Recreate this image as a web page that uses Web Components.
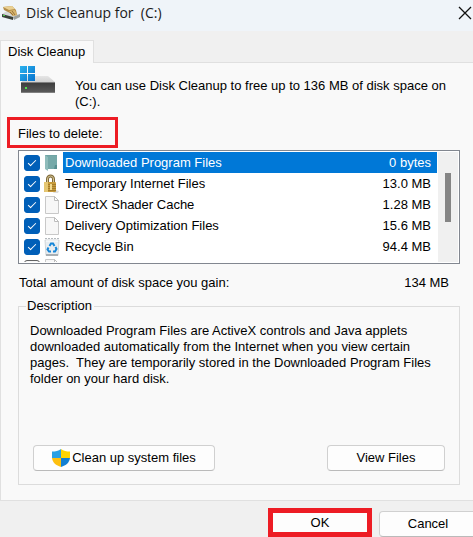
<!DOCTYPE html>
<html lang="en">
<head>
<meta charset="utf-8">
<title>Disk Cleanup</title>
<style>
html, body {
    height: 100%;
}

body {
    margin: 0;
    overflow: hidden;
    font: 13px/16px "Liberation Sans", Arial, sans-serif;
    color: #000;
    background: #f0f0f0;
}
</style>
</head>
<body>

<cleanup-dialog>
    <title-bar>Disk Cleanup for&nbsp; (C:)</title-bar>
    <tab-panel label="Disk Cleanup">
        <drive-info>You can use Disk Cleanup to free up to 136 MB of disk space on (C:).</drive-info>
        <mark-box>Files to delete:</mark-box>
        <file-list>
            <file-item name="Downloaded Program Files" size="0 bytes" icon="folder" checked selected></file-item>
            <file-item name="Temporary Internet Files" size="13.0 MB" icon="lock" checked></file-item>
            <file-item name="DirectX Shader Cache" size="1.28 MB" icon="page" checked></file-item>
            <file-item name="Delivery Optimization Files" size="15.6 MB" icon="page" checked></file-item>
            <file-item name="Recycle Bin" size="94.4 MB" icon="bin" checked></file-item>
            <file-item icon="page"></file-item>
        </file-list>
        <total-line size="134 MB">Total amount of disk space you gain:</total-line>
        <group-box label="Description">
            Downloaded Program Files are ActiveX controls and Java applets downloaded automatically from the Internet when you view certain pages.&nbsp; They are temporarily stored in the Downloaded Program Files folder on your hard disk.
            <push-button slot="actions" class="wide" shield>Clean up system files</push-button>
            <push-button slot="actions" class="medium">View Files</push-button>
        </group-box>
    </tab-panel>
    <push-button slot="footer" class="ok" marked>OK</push-button>
    <push-button slot="footer" class="cancel">Cancel</push-button>
</cleanup-dialog>

<script>
(function () {

    // Shared helper: clone a template string into an open shadow root
    function attach(host, html) {
        const template = document.createElement('template');
        template.innerHTML = html;
        const root = host.attachShadow({ mode: 'open' });
        root.appendChild(template.content.cloneNode(true));
        return root;
    }

    const icons = {
        folder: `
<svg width="16" height="18" viewBox="0 0 16 18">
    <path d="M1 1h12v14H1z" fill="#6fa3a4"/>
    <path d="M1 1l3 2v14l-3-2z" fill="#8fbcbb"/>
    <path d="M4 2h9v13H4z" fill="#76a9a9"/>
    <path d="M11 11h2v4h-3z" fill="#568e90"/>
</svg>`,
        lock: `
<svg width="16" height="20" viewBox="0 0 16 20">
    <path d="M3.500 9V5a3 3 0 0 1 6 0V9" fill="none" stroke="#7f6a3a" stroke-width="3"/>
    <path d="M3.500 9V5a3 3 0 0 1 6 0V9" fill="none" stroke="#d5c595" stroke-width="1"/>
    <path d="M11 16l4 1-1 2h-5z" fill="#ddd"/>
    <rect x="0" y="8" width="12" height="10" rx="1" fill="#c79b3b"/>
    <path d="M0 8h4v10H1l-1-1z" fill="#e5c671"/>
    <path d="M4 10.500h8M4 12.500h8M4 14.500h8M4 16.500h8" stroke="#a37c2b"/>
    <path d="M6 10h2v6H6z" fill="#f1d98d"/>
</svg>`,
        page: `
<svg width="16" height="18" viewBox="0 0 16 18">
    <path d="M1.500.500h9l4 4v13h-13z" fill="#f7f7f7" stroke="#c8c8c8"/>
    <path d="M10.500.500v4h4z" fill="#fff" stroke="#bcbcbc"/>
</svg>`,
        bin: `
<svg width="16" height="20" viewBox="0 0 16 20">
    <path d="M1 3h14l-1 15.500H2z" fill="#e9edf0" stroke="#d0d5d8"/>
    <path d="M1 1.500h14" stroke="#b4b9bd" stroke-dasharray="2 1"/>
    <path d="M2 4h12" stroke="#fff"/>
    <path d="M2 17h12v2H2z" fill="#a9afb3"/>
    <path d="M5.500 9L7 6.500h2L10.500 9M11.500 10l1 2-1.500 2.500H9M7 14.500H5L3.500 12.500l1-2" fill="none" stroke="#1686d8" stroke-width="2"/>
</svg>`
    };

    class CleanupDialog extends HTMLElement {
        constructor() {
            super();
            attach(this, `
<style>
:host {
    display: flex;
    flex-direction: column;
    min-height: 100%;
}

footer {
    display: flex;
    justify-content: flex-end;
    align-items: flex-end;
    gap: 7px;
    padding-top: 7px;
    /* the dialog runs on past the right edge of the window */
    margin-right: -4px;
}
</style>
<slot></slot>
<footer><slot name="footer"></slot></footer>`);
        }
    }

    class TitleBar extends HTMLElement {
        constructor() {
            super();
            attach(this, `
<style>
:host {
    display: block;
    background: #eff4f9;
}

header {
    display: flex;
    align-items: center;
    height: 31px;
    padding: 0 1px;
    box-sizing: border-box;
}

h1 {
    flex: 1;
    margin: 0 0 5px 6px;
    font: 14px/20px "Open Sans", "Noto Sans", sans-serif;
    color: #1b1b1b;
}

svg {
    display: block;
    margin-bottom: 6px;
}

button {
    padding: 0;
    border: 0;
    background: none;
}
</style>
<header>
    <svg width="19" height="16" viewBox="0 0 19 16">
        <path d="M1 9l5-3 13 4-6 4z" fill="#d4d7d7"/>
        <path d="M1 9l11 3v3L1 12z" fill="#394039"/>
        <path d="M12 12l7-3v3l-6 3z" fill="#9da19e"/>
        <path d="M2 10h2v1H2z" fill="#4bd44b"/>
        <path d="M2 2l9-1 4 4 1 5-4 1-3-3-6-3z" fill="#b38c47"/>
        <path d="M2 2l9-1 3 3-6 1z" fill="#ead092"/>
        <path d="M8 6l6-1 2 5-4 1z" fill="#d7b56c"/>
        <path d="M9 7l3 3M11 6l3 4" stroke="#97713a"/>
    </svg>
    <h1><slot></slot></h1>
    <button type="button" aria-label="Close">
        <svg width="14" height="14" viewBox="0 0 14 14">
            <path d="M1 1l12 12M13 1L1 13" stroke="#111" stroke-width="1.300"/>
        </svg>
    </button>
</header>`);
        }
    }

    class TabPanel extends HTMLElement {
        constructor() {
            super();
            this.root = attach(this, `
<style>
:host {
    display: block;
    padding-top: 9px;
}

button {
    position: relative;
    z-index: 1;
    display: block;
    height: 23px;
    margin: 0 0 -1px;
    padding: 0 8px 0 7px;
    border: 1px solid #e0e0e0;
    border-bottom: 0;
    background: #f9f9f9;
    font: inherit;
    color: inherit;
}

section {
    padding: 15px 13px 15px 17px;
    border: solid #e0e0e0;
    border-width: 1px 0 1px 1px;
    background: #f9f9f9;
}
</style>
<button type="button" role="tab" aria-selected="true"></button>
<section role="tabpanel"><slot></slot></section>`);
        }

        connectedCallback() {
            this.root.querySelector('button').textContent = this.getAttribute('label');
        }
    }

    class DriveInfo extends HTMLElement {
        constructor() {
            super();
            attach(this, `
<style>
:host {
    display: flex;
    align-items: flex-start;
    gap: 20px;
}

svg {
    flex: none;
    margin-top: -13px;
}

p {
    margin: 0;
}
</style>
<svg width="37" height="30" viewBox="0 0 37 30">
    <defs>
        <linearGradient id="top" x2="0" y2="1"><stop stop-color="#e6e6e6"/><stop offset="1" stop-color="#cfcfcf"/></linearGradient>
        <linearGradient id="front" x2="0" y2="1"><stop stop-color="#3a3a3a"/><stop offset="1" stop-color="#5c5c5c"/></linearGradient>
        <linearGradient id="logo" x2="1" y2="1"><stop stop-color="#2db3ee"/><stop offset="1" stop-color="#0672cd"/></linearGradient>
    </defs>
    <path d="M8 11h22l7 6v1H3z" fill="url(#top)"/>
    <path d="M3 17h34v11H3z" fill="url(#front)"/>
    <path d="M3 17h34v1H3zM3 27h34v1H3z" fill="#808080"/>
    <path d="M7 22h2v2H7z" fill="#4fe04f"/>
    <path d="M2 1h7v7H2zM10 1h7v7h-7zM2 9h7v7H2zM10 9h7v7h-7z" fill="url(#logo)"/>
</svg>
<p><slot></slot></p>`);
        }
    }

    class MarkBox extends HTMLElement {
        constructor() {
            super();
            attach(this, `
<style>
:host {
    display: block;
    width: max-content;
    margin: 7px 0 2px -11px;
    padding: 6px 12px 3px 8px;
    border: 3px solid #ed1c24;
}
</style>
<slot></slot>`);
        }
    }

    class FileList extends HTMLElement {
        constructor() {
            super();
            attach(this, `
<style>
:host {
    display: flex;
    height: 110px;
    padding: 1px;
    border: 1px solid #828790;
    background: #fff;
}

.rows {
    flex: 1;
    min-width: 0;
    overflow: hidden;
}

.bar {
    width: 20px;
    margin-left: 1px;
    background: #f0f0f0;
}

.thumb {
    width: 6px;
    height: 49px;
    margin: 21px 7px 0;
    background: #858585;
}
</style>
<div class="rows"><slot></slot></div>
<div class="bar"><div class="thumb"></div></div>`);
        }
    }

    class FileItem extends HTMLElement {
        constructor() {
            super();
            this.root = attach(this, `
<style>
:host {
    display: block;
}

label {
    display: flex;
    align-items: center;
    height: 21px;
}

input {
    appearance: none;
    flex: none;
    width: 16px;
    height: 16px;
    margin: 0 4px;
    border: 1px solid #626262;
    border-radius: 3px;
    background: #f5f5f5;
}

input:checked {
    border-color: #005fb8;
    background: #005fb8;
}

/* white tick */
input:checked::before {
    content: '';
    display: block;
    width: 8px;
    height: 4px;
    margin: 4px 3px;
    border: solid #fff;
    border-width: 0 0 1px 1px;
    transform: rotate(-45deg);
    box-sizing: border-box;
}

.icon {
    flex: none;
    width: 16px;
    height: 20px;
    display: flex;
    align-items: center;
    margin-right: 3px;
}

.text {
    flex: 1;
    display: flex;
    justify-content: space-between;
    padding: 0 6px 0 2px;
    line-height: 21px;
}

:host([selected]) .text {
    background: #0078d7;
    color: #fff;
}
</style>
<label>
    <input type="checkbox">
    <span class="icon"></span>
    <span class="text"><span class="name"></span><span class="size"></span></span>
</label>`);
        }

        connectedCallback() {
            this.root.querySelector('input').checked = this.hasAttribute('checked');
            this.root.querySelector('.icon').innerHTML = icons[this.getAttribute('icon')];
            this.root.querySelector('.name').textContent = this.getAttribute('name');
            this.root.querySelector('.size').textContent = this.getAttribute('size');
        }
    }

    class TotalLine extends HTMLElement {
        constructor() {
            super();
            this.root = attach(this, `
<style>
:host {
    display: flex;
    justify-content: space-between;
    padding: 11px 11px 7px 1px;
}
</style>
<span><slot></slot></span>
<output></output>`);
        }

        connectedCallback() {
            this.root.querySelector('output').textContent = this.getAttribute('size');
        }
    }

    class GroupBox extends HTMLElement {
        constructor() {
            super();
            this.root = attach(this, `
<style>
:host {
    display: block;
}

fieldset {
    display: block;
    min-width: 0;
    margin: 0;
    padding: 9px 14px 13px;
    border: 1px solid #dcdcdc;
}

legend {
    margin-left: -7px;
    padding: 0 2px 0 1px;
}

p {
    min-height: 64px;
    margin: 0 0 58px -3px;
    padding-right: 8px;
}

div {
    display: flex;
    justify-content: space-between;
}
</style>
<fieldset>
    <legend></legend>
    <p><slot></slot></p>
    <div><slot name="actions"></slot></div>
</fieldset>`);
        }

        connectedCallback() {
            this.root.querySelector('legend').textContent = this.getAttribute('label');
        }
    }

    class PushButton extends HTMLElement {
        constructor() {
            super();
            this.root = attach(this, `
<style>
:host {
    display: block;
    width: 98px;
}

:host(.wide) {
    width: 182px;
}

:host(.medium) {
    width: 118px;
}

:host([marked]) {
    width: 104px;
}

button {
    display: flex;
    justify-content: center;
    align-items: center;
    gap: 2px;
    width: 100%;
    height: 26px;
    padding: 0;
    border: 1px solid #d0d0d0;
    border-bottom-color: #bababa;
    border-radius: 4px;
    background: #fdfdfd;
    font: inherit;
    color: inherit;
}

:host([marked]) button {
    height: 29px;
    border: 5px solid #ed1c24;
    border-radius: 0;
}

svg {
    display: none;
}

:host([shield]) svg {
    display: block;
}
</style>
<button type="button">
    <svg width="18" height="18" viewBox="0 0 18 18">
        <path d="M9 0C6.500 2 3.500 2.500 0 2.500V9h9z" fill="#2aa0e4"/>
        <path d="M9 0c2.500 2 5.500 2.500 9 2.500V9H9z" fill="#ffd500"/>
        <path d="M0 9c.500 4.500 4 7.500 9 9V9z" fill="#fdbf0f"/>
        <path d="M18 9c-.500 4.500-4 7.500-9 9V9z" fill="#127fd2"/>
    </svg>
    <span><slot></slot></span>
</button>`);
        }
    }

    window.customElements.define('cleanup-dialog', CleanupDialog);
    window.customElements.define('title-bar', TitleBar);
    window.customElements.define('tab-panel', TabPanel);
    window.customElements.define('drive-info', DriveInfo);
    window.customElements.define('mark-box', MarkBox);
    window.customElements.define('file-list', FileList);
    window.customElements.define('file-item', FileItem);
    window.customElements.define('total-line', TotalLine);
    window.customElements.define('group-box', GroupBox);
    window.customElements.define('push-button', PushButton);
})();
</script>
</body>
</html>
